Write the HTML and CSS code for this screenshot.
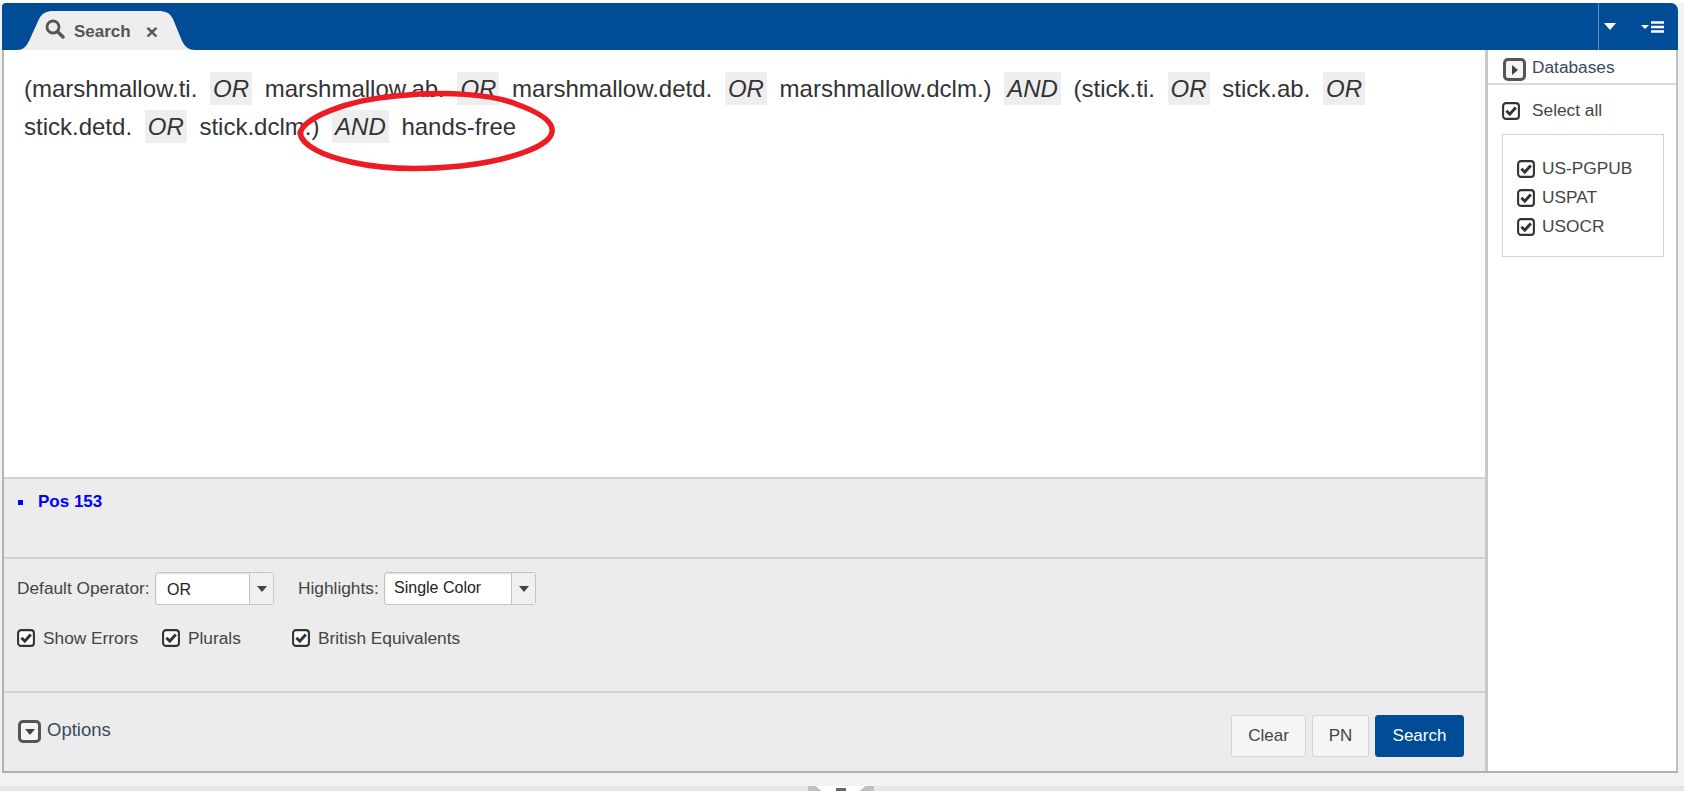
FILE: index.html
```html
<!DOCTYPE html>
<html lang="en">
<head>
<meta charset="utf-8">
<title>Search</title>
<link rel="stylesheet" href="styles.css">
</head>
<body>
<svg class="defs" width="0" height="0" aria-hidden="true">
  <defs>
    <symbol id="check" viewBox="0 0 18 18">
      <rect x="1.1" y="1.1" width="15.8" height="15.8" rx="3" fill="#fff" stroke="#333" stroke-width="2.1"/>
      <path d="M4.4 8.8 L7.8 12.2 L13.8 5.6" fill="none" stroke="#333" stroke-width="3"/>
    </symbol>
  </defs>
</svg>
<div class="app">
  <header class="topbar">
    <div class="tab">
      <svg class="tab-icon" width="20" height="20" viewBox="0 0 20 20"><circle cx="8" cy="8" r="6" fill="none" stroke="#555" stroke-width="2.8"/><path d="M12.5 12.5 L18 18" stroke="#555" stroke-width="3.4" stroke-linecap="round"/></svg>
      <span class="tab-label">Search</span>
      <span class="tab-close">×</span>
    </div>
    <div class="top-tools">
      <button class="tool tool-a"><span class="caret-white"></span></button>
      <button class="tool tool-b"><span class="caret-white small"></span><svg width="13" height="12" viewBox="0 0 13 12"><path d="M0 1.5H13M0 6H13M0 10.5H13" stroke="#fff" stroke-width="2.4"/></svg></button>
    </div>
  </header>
  <div class="workspace">
    <main class="main">
      <section class="editor">
        <p class="query">(marshmallow.ti. <i class="op">OR</i> marshmallow.ab. <i class="op">OR</i> marshmallow.detd. <i class="op">OR</i> marshmallow.dclm.) <i class="op">AND</i> (stick.ti. <i class="op">OR</i> stick.ab. <i class="op">OR</i> stick.detd. <i class="op">OR</i> stick.dclm.) <i class="op">AND</i> hands-free</p>
        <svg class="annotation" width="270" height="90" viewBox="0 0 270 90"><path d="M4 45 C8 30 50 12 100 8 C150 3 195 6 220 16 C245 25 258 34 256 44 C254 58 216 72 165 78 C125 82 85 81 55 74 C28 68 6 58 4 45 Z" fill="none" stroke="#ed1c24" stroke-width="5.5"/></svg>
      </section>
      <section class="status">
        <ul class="errors"><li>Pos 153</li></ul>
      </section>
      <section class="settings">
        <div class="settings-row">
          <label class="field-label">Default Operator:</label>
          <div class="select select-op"><span class="select-value big">OR</span><span class="select-btn"><span class="caret-dark"></span></span></div>
          <label class="field-label second">Highlights:</label>
          <div class="select select-hl"><span class="select-value">Single Color</span><span class="select-btn"><span class="caret-dark"></span></span></div>
        </div>
        <div class="settings-row checks">
          <span class="check c1"><svg class="cb"><use href="#check"/></svg>Show Errors</span>
          <span class="check c2"><svg class="cb"><use href="#check"/></svg>Plurals</span>
          <span class="check"><svg class="cb"><use href="#check"/></svg>British Equivalents</span>
        </div>
      </section>
      <footer class="actions">
        <div class="options"><span class="box-icon"><span class="caret-dark"></span></span><span class="options-label">Options</span></div>
        <div class="buttons">
          <button class="btn btn-clear">Clear</button>
          <button class="btn btn-pn">PN</button>
          <button class="btn btn-primary">Search</button>
        </div>
      </footer>
    </main>
    <aside class="side">
      <div class="side-head"><span class="box-icon small"><span class="caret-right"></span></span><span>Databases</span></div>
      <div class="select-all"><svg class="cb"><use href="#check"/></svg><span>Select all</span></div>
      <div class="db-box">
        <div class="db-item"><svg class="cb"><use href="#check"/></svg>US-PGPUB</div>
        <div class="db-item"><svg class="cb"><use href="#check"/></svg>USPAT</div>
        <div class="db-item"><svg class="cb"><use href="#check"/></svg>USOCR</div>
      </div>
    </aside>
  </div>
</div>
<div class="bottom-strip"><div class="grabber"><span class="grab-notch"><span class="grab-caret"></span></span></div></div>
</body>
</html>
```
FILE: styles.css
```css
* { box-sizing: border-box; }
html, body { margin: 0; height: 100%; }
body { background: #f2f2f2; font-family: "Liberation Sans", Arial, sans-serif; color: #333; overflow: hidden; position: relative; }
.defs { position: absolute; }
.app { height: 770px; margin: 3px 6px 0 2px; display: flex; flex-direction: column; background: #fff; border-bottom: 2px solid #b0b0b0; }
body::before { content: ""; position: absolute; left: 0; right: 0; top: 0; height: 3px; background: #fff; }
.topbar { height: 47px; flex: none; background: #004c97; border-radius: 4px 7px 0 0; display: flex; justify-content: space-between; align-items: flex-end; }
.tab { width: 178px; height: 39px; margin-left: 15px; background: #eee; display: flex; align-items: center; padding: 0 0 0 28px;
  clip-path: path("M0 39 C6 39 9 36 12 30 L22 8 C25 2 30 0 36 0 L141 0 C149 0 153 2 156 8 L165 30 C168 36 172 39 178 39 Z"); }
.tab-icon { margin-right: 9px; margin-top: -3px; flex: none; }
.tab-label { font-weight: 700; font-size: 17px; color: #555; margin-top: 2px; }
.tab-close { font-weight: 700; font-size: 21px; color: #555; margin-left: 15px; line-height: 20px; margin-top: 2px; }
.top-tools { display: flex; height: 47px; }
.tool { border: 0; background: transparent; padding: 0; display: flex; align-items: center; }
.tool-a { width: 30px; border-left: 1px solid #5c8cc0; padding-left: 5px; }
.tool-b { width: 50px; justify-content: flex-end; padding-right: 14px; gap: 2px; }
.caret-white { width: 0; height: 0; border-left: 6px solid transparent; border-right: 6px solid transparent; border-top: 7px solid #fff; }
.caret-white.small { border-left-width: 4px; border-right-width: 4px; border-top-width: 4px; }
.workspace { flex: 1; display: flex; min-height: 0; border-right: 2px solid #c0c0c0; }
.main { width: 1486px; flex: none; display: flex; flex-direction: column; border-left: 2px solid #b4b4b4; border-right: 3px solid #c8c8c8; }
.editor { height: 427px; flex: none; background: #fff; padding: 20px 16px 0 20px; position: relative; }
.query { margin: 0; font-size: 24px; line-height: 38px; word-spacing: 2px; color: #333; }
.op { background: #eee; padding: 3px 3px; margin: 0 4px; font-style: italic; }
.annotation { position: absolute; left: 292px; top: 38px; pointer-events: none; }
.status { height: 80px; flex: none; background: #ececec; border-top: 2px solid #d2d2d2; padding: 13px 0 0 12px; }
.errors { margin: 0; padding: 0; list-style: none; }
.errors li { font-weight: 700; font-size: 17px; line-height: 20px; color: #0000ff; padding-left: 22px; position: relative; }
.errors li::before { content: ""; position: absolute; left: 2px; top: 8px; width: 5px; height: 5px; background: #0000ff; }
.settings { height: 134px; flex: none; background: #ececec; border-top: 2px solid #d2d2d2; padding: 13px 0 0 13px; }
.settings-row { display: flex; align-items: center; font-size: 17.3px; color: #444; }
.field-label { width: 138px; flex: none; }
.field-label.second { width: 86px; margin-left: 24px; }
.select { height: 33px; background: #fff; border: 1px solid #c4c4c4; border-radius: 3px; display: flex; box-shadow: inset 0 1px 2px #ddd; }
.select-op { width: 119px; }
.select-hl { width: 152px; }
.select-value { flex: 1; font-size: 16px; color: #222; padding: 0 0 0 9px; line-height: 30px; }
.select-value.big { font-size: 16px; padding-left: 11px; line-height: 33px; }
.select-btn { width: 24px; border-left: 1px solid #c4c4c4; background: #f0f0f0; display: flex; align-items: center; justify-content: center; }
.caret-dark { width: 0; height: 0; border-left: 5.5px solid transparent; border-right: 5.5px solid transparent; border-top: 6px solid #444; }
.checks { margin-top: 23px; height: 20px; }
.check { display: flex; align-items: center; }
.c1 { width: 145px; }
.c2 { width: 130px; }
.cb { width: 18px; height: 18px; flex: none; margin-right: 8px; }
.actions { flex: 1; background: #ececec; border-top: 2px solid #d2d2d2; display: flex; justify-content: space-between; padding: 22px 21px 0 14px; }
.options { display: flex; align-items: flex-start; margin-top: 5px; }
.options-label { margin-left: 6px; font-size: 18.5px; line-height: 20px; color: #3c4a5c; }
.box-icon { width: 23px; height: 23px; border: 3px solid #555; border-radius: 5px; display: flex; align-items: center; justify-content: center; background: #f4f4f4; }
.buttons { display: flex; gap: 6px; }
.btn { height: 42px; border-radius: 3px; font: 17px "Liberation Sans", Arial, sans-serif; border: 1px solid #d4d4d4; background: #f5f5f5; color: #444; padding: 0; }
.btn-clear { width: 75px; }
.btn-pn { width: 57px; }
.btn-primary { width: 89px; background: #004c97; border-color: #004c97; color: #fff; }
.side { flex: 1; background: #fff; font-size: 17.3px; color: #444; display: flex; flex-direction: column; }
.side-head { height: 35px; flex: none; border-bottom: 2px solid #dcdcdc; display: flex; align-items: flex-start; padding: 8px 0 0 15px; gap: 6px; line-height: 18px; color: #3c4a5c; }
.side-head .box-icon { margin-top: 0; }
.caret-right { width: 0; height: 0; border-top: 5.5px solid transparent; border-bottom: 5.5px solid transparent; border-left: 6px solid #444; }
.select-all { display: flex; align-items: center; padding: 2px 0 0 14px; height: 49px; }
.select-all .cb { margin-right: 12px; }
.db-box { width: 162px; height: 123px; margin: 0 0 0 14px; border: 1px solid #d2d2d2; padding: 19px 0 0 14px; }
.db-item { display: flex; align-items: center; height: 29px; }
.db-item .cb { margin-right: 7px; }
.bottom-strip { position: absolute; left: 0; right: 0; bottom: 0; height: 5px; background: #e6e6e6; display: flex; justify-content: center; }
.grabber { width: 66px; height: 5px; margin-left: -3px; background: #c0c0c0; display: flex; justify-content: center; }
.grab-notch { width: 50px; height: 5px; background: #fff; display: flex; justify-content: center; align-items: flex-end; clip-path: polygon(0 0, 100% 0, 88% 100%, 12% 100%); }
.grab-caret { width: 10px; height: 3px; background: #666; }
```
